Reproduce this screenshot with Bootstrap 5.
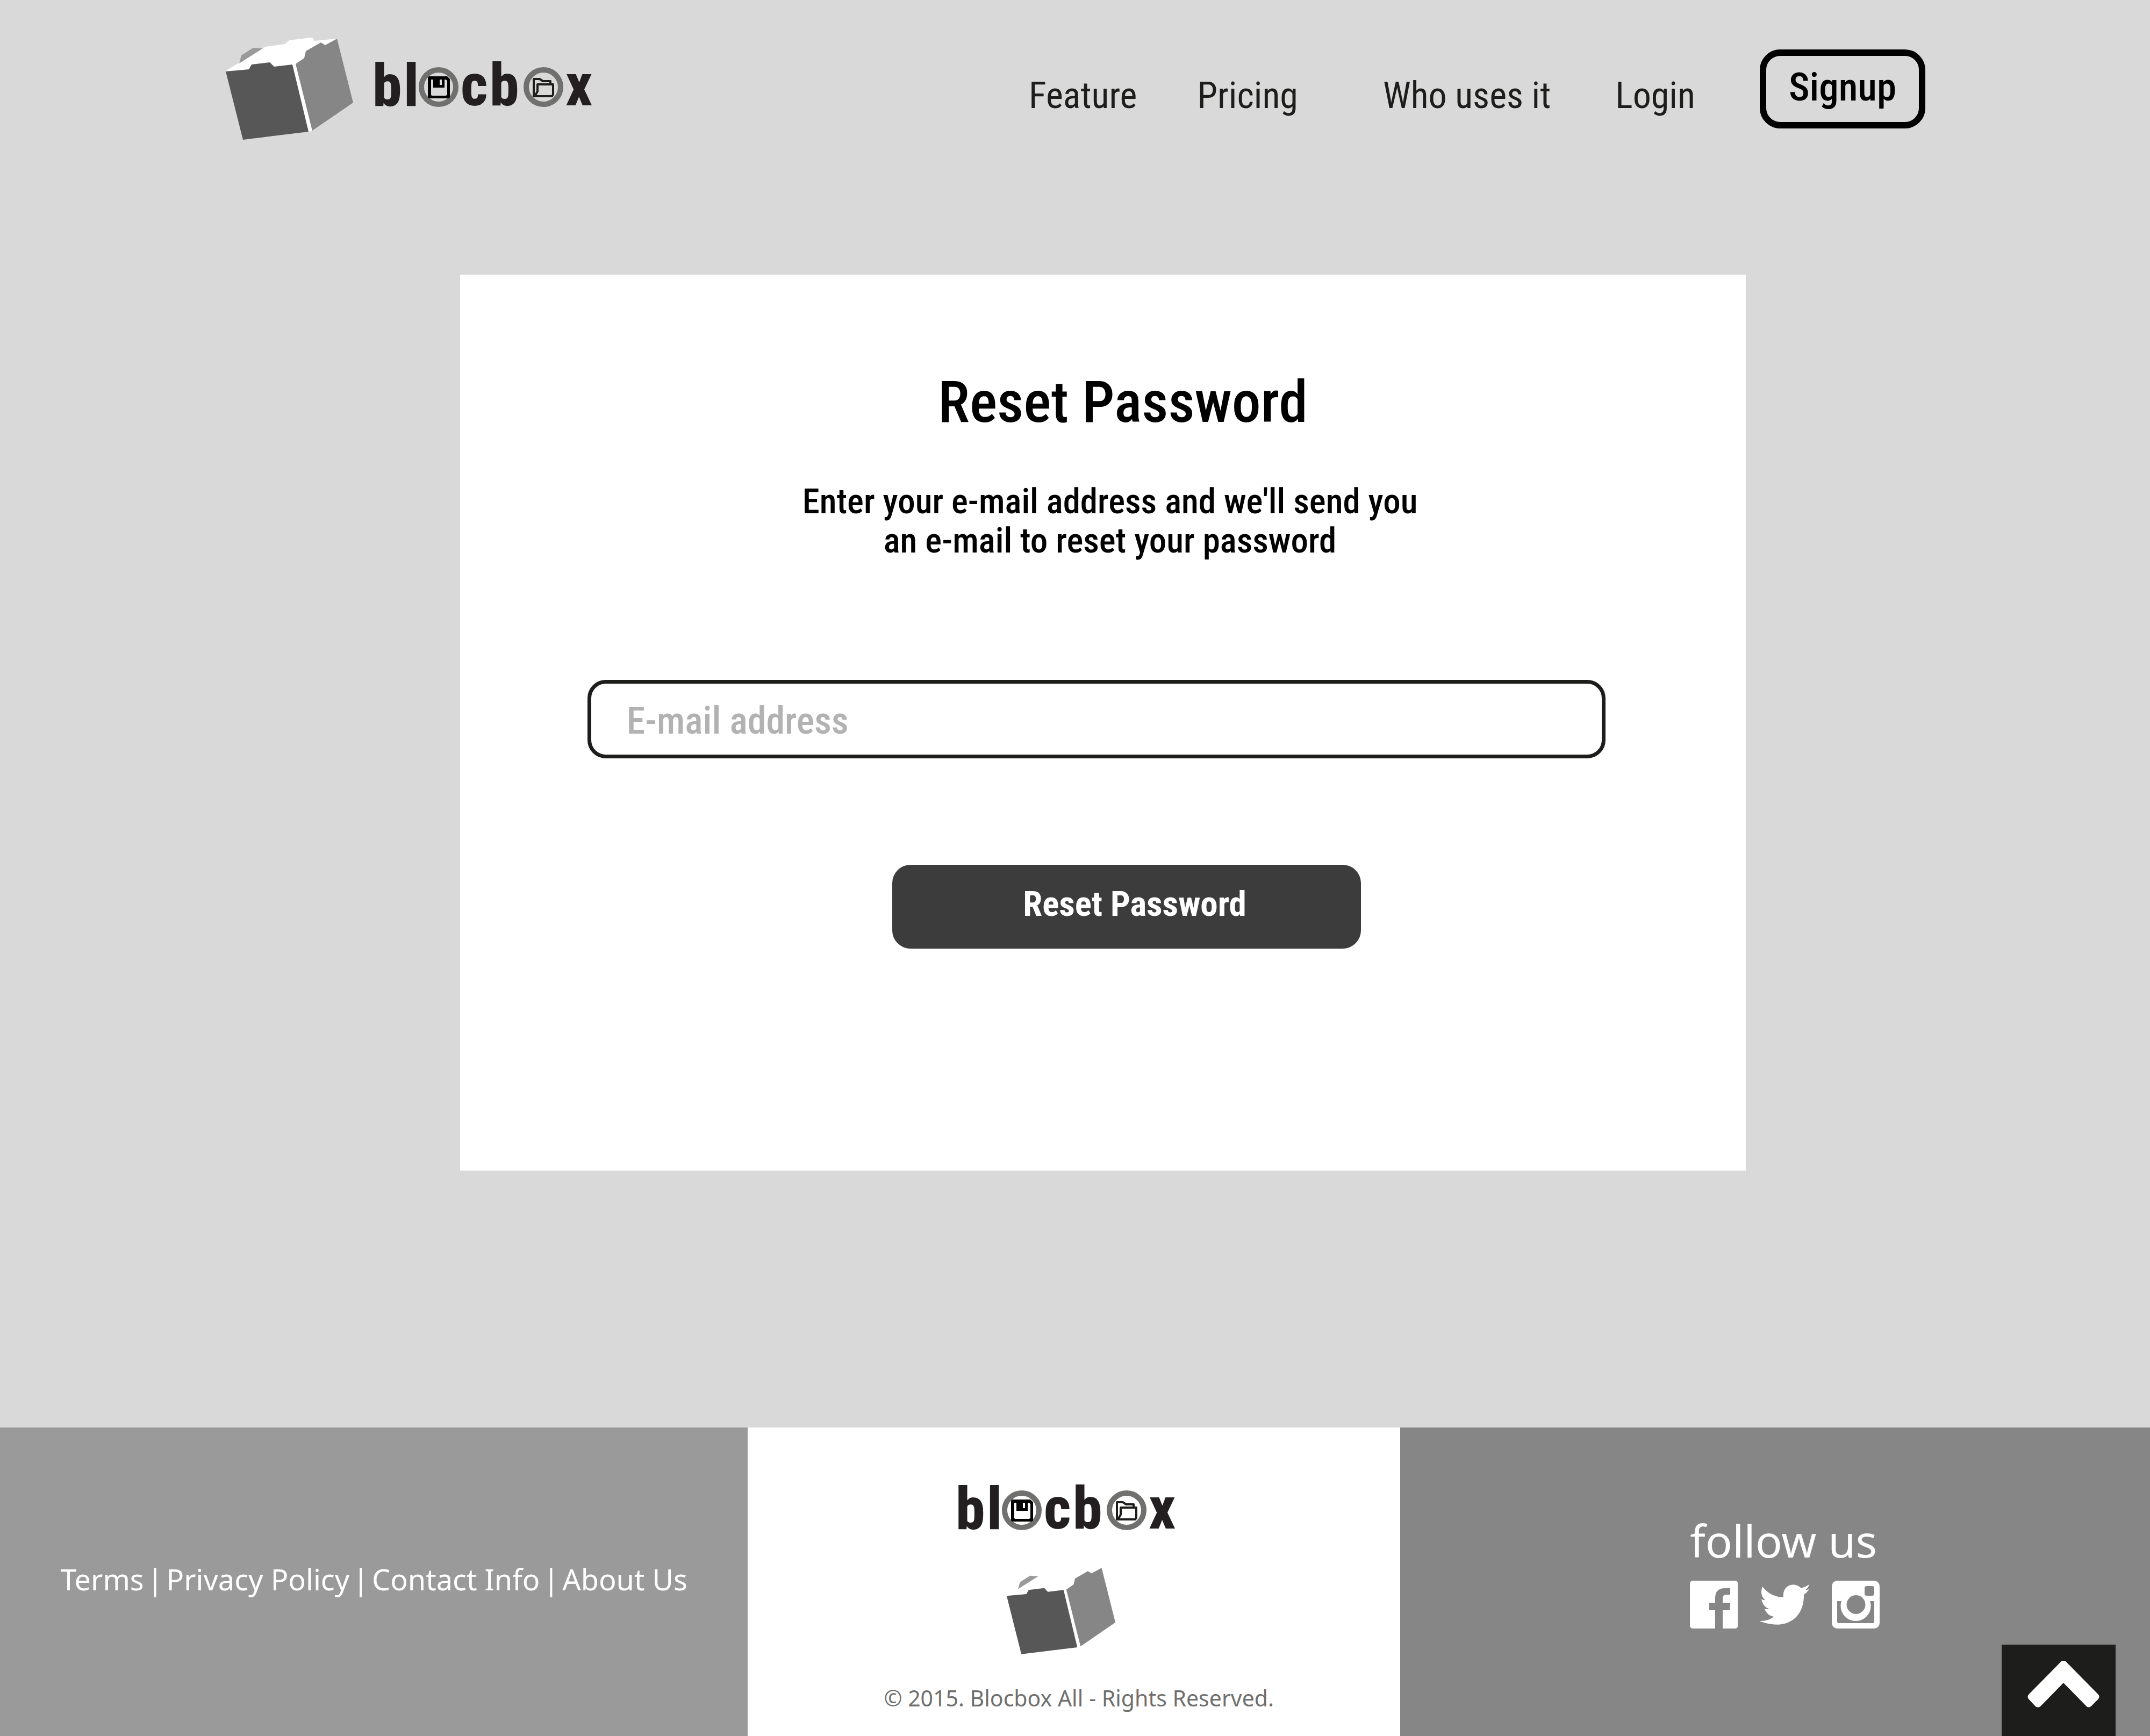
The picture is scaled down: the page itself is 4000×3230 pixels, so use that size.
<!DOCTYPE html>
<html lang="en">
<head>
<meta charset="utf-8">
<meta name="viewport" content="width=device-width, initial-scale=1">
<title>Blocbox - Reset Password</title>
<link rel="stylesheet" href="https://cdn.jsdelivr.net/npm/bootstrap@5.3.0/dist/css/bootstrap.min.css">
<style>
  body { background: #d9d9d9; font-family: "Roboto Condensed", "Liberation Sans Narrow", "Liberation Sans", sans-serif; color: #000; }
  .site-head { padding: 68px 10.45% 0; }
  .brand-logo { width: 688px; height: 194px; }
  .site-nav .nav-link { padding: 26px 0 0; font-size: 68px; line-height: 80px; color: #1d1d1b; }
  .gap-s { margin-right: 112px; }
  .gap-m { margin-right: 120px; }
  .gap-l { margin-right: 158px; }
  .btn-signup { border: 12px solid #000; border-radius: 38px; padding: 18px 42px 24px; font-size: 73px; line-height: 81px; font-weight: 500; color: #000; }
  .reset-card { width: 59.8%; margin: 249px 0 0 21.4%; padding: 172px 0 413px; background: #fff; }
  .reset-title { font-size: 108px; line-height: 130px; font-weight: 500; padding-left: 74px; margin: 0 0 84px; }
  .reset-text { font-size: 65px; line-height: 73px; font-weight: 500; padding-left: 26px; margin: 0 0 222px; }
  .reset-form { padding: 0 10.9% 0 9.9%; }
  .mail-box { height: 146px; border: 7px solid #1d1d1b; border-radius: 34px; padding: 6px 66px 0; font-size: 70px; font-weight: 500; }
  .mail-box::placeholder { color: #b2b2b2; opacity: 1; }
  .btn-reset { width: 46%; margin: 198px 0 0 112px; padding: 27px 0 37px 30px; border-radius: 34px; background: #3c3c3c; color: #fff; font-size: 65px; line-height: 90px; font-weight: 700; }
  .site-foot { min-height: 574px; font-family: "Noto Sans", "Open Sans", sans-serif; color: #fff; }
  .foot-links { width: 34.78%; padding-bottom: 10px; background: #9a9a9a; font-size: 54px; line-height: 80px; }
  .foot-links nav { gap: 6px; }
  .foot-brand { width: 30.35%; background: #fff; color: #6f6f6e; padding: 105px 0 30px; }
  .foot-follow { background: #868686; padding-left: 539px; padding-top: 160px; }
  .foot-word { width: 412px; height: 92px; margin-left: 22px; }
  .foot-box { width: 204px; height: 163px; margin: 63px 0 50px; }
  .foot-copy { font-size: 41px; line-height: 60px; padding-left: 18px; }
  .follow-title { font-size: 83px; line-height: 100px; margin: 0 0 25px; }
  .social-row { gap: 42px; }
  .social-icon { width: 90px; height: 90px; display: block; overflow: visible; }
  .btn-top { right: 64px; bottom: 0; width: 212px; height: 170px; background: #1d1d1b; border-radius: 0; padding: 29px 0 0 18px; }
</style>
<script src="https://cdn.jsdelivr.net/npm/bootstrap@5.3.0/dist/js/bootstrap.bundle.min.js"></script>
</head>
<body class="d-flex flex-column min-vh-100">
<svg width="0" height="0" class="position-absolute" aria-hidden="true">
  <defs>
    <g id="folderBox">
      <path fill="#fff" d="M420 132 488 90 493 87 530 82 538 75 577 70 582 71 585 76 627 72 600 110 552 119 581 244 574 245 544 122 500 130Z"/>
      <path fill="#9a9a9a" d="M445 118 449 103 471 89 489 90Z"/>
      <path fill="#575757" d="M420 133 463 129 468 120 502 116 510 124 544 120 574 245 452 260Z"/>
      <path fill="#868686" d="M550 119 566 108 569 95 597 79 605 84 627 72 657 191 581 243Z"/>
    </g>
    <g id="wordMark">
      <g font-family="'Roboto Condensed','Liberation Sans Narrow','Liberation Sans',sans-serif" font-weight="800" font-size="110" fill="#231f20">
        <text x="693" y="197">b</text><text x="751" y="197">l</text><text x="857" y="196">c</text><text x="911" y="196">b</text><text x="1052" y="196">x</text>
      </g>
      <g fill="none" stroke="#70706f" stroke-width="10"><circle cx="816" cy="162" r="32"/><circle cx="1011" cy="162" r="32"/></g>
      <path fill="#000" fill-rule="evenodd" d="M798 142H832L837 147V181L835 183H798L796 181V144ZM802 148V176L803 178H830L832 176V150L829 148H827V163H806V148ZM818 148V158H822V148Z"/>
      <path fill="none" stroke="#1d1d1b" stroke-width="4" stroke-linejoin="round" d="M1024 155V151H1010L1004 147H993V179H1027L1029 176V157H1000V170L995 179"/>
    </g>
  </defs>
</svg>

<header class="site-head d-flex align-items-center justify-content-between">
  <a href="#" aria-label="blocbox">
    <svg class="brand-logo d-block" viewBox="418 68 688 194"><use href="#folderBox"/><use href="#wordMark"/></svg>
  </a>
  <nav class="site-nav d-flex align-items-center" aria-label="Main">
    <a class="nav-link gap-s" href="#">Feature</a>
    <a class="nav-link gap-l" href="#">Pricing</a>
    <a class="nav-link gap-m" href="#">Who uses it</a>
    <a class="nav-link gap-m" href="#">Login</a>
    <button type="button" class="btn btn-signup">Signup</button>
  </nav>
</header>

<main class="flex-grow-1">
  <section class="reset-card">
    <h1 class="reset-title text-center">Reset Password</h1>
    <p class="reset-text text-center">Enter your e-mail address and we'll send you<br>an e-mail to reset your password</p>
    <form class="reset-form">
      <input class="form-control mail-box" type="email" id="email" aria-label="E-mail address" placeholder="E-mail address">
      <div class="d-flex justify-content-center"><button type="button" class="btn btn-reset">Reset Password</button></div>
    </form>
  </section>
</main>

<footer class="site-foot d-flex position-relative">
  <div class="foot-links d-flex align-items-center justify-content-center">
    <nav class="d-flex" aria-label="Footer">
      <a class="text-reset text-decoration-none" href="#">Terms</a><span>|</span>
      <a class="text-reset text-decoration-none" href="#">Privacy Policy</a><span>|</span>
      <a class="text-reset text-decoration-none" href="#">Contact Info</a><span>|</span>
      <a class="text-reset text-decoration-none" href="#">About Us</a>
    </nav>
  </div>
  <div class="foot-brand d-flex flex-column align-items-center">
    <div class="d-flex flex-column align-items-center pe-5">
      <svg class="foot-word" viewBox="694 113 412 92" role="img" aria-label="blocbox"><use href="#wordMark"/></svg>
      <svg class="foot-box" viewBox="419 71 239 190" aria-hidden="true"><use href="#folderBox"/></svg>
    </div>
    <div class="foot-copy">© 2015. Blocbox All - Rights Reserved.</div>
  </div>
  <div class="foot-follow flex-grow-1">
    <h2 class="follow-title fw-normal">follow us</h2>
    <div class="social-row d-flex">
      <a href="#" aria-label="Facebook"><svg class="social-icon" viewBox="0 0 90 90"><path fill="#fff" d="M4 0H86L89 3V86L86 89H61V55H74L75 41H61V33Q61 26 68 26H75V14H65Q48 14 47 31V41H36V55H47V89H4L0 86V3Z"/></svg></a>
      <a href="#" aria-label="Twitter"><svg class="social-icon" viewBox="0 0 90 90"><path fill="#fff" d="M-3 75Q13 76 24 67Q12 65 7 53H16Q3 48 1 34Q5 37 8 36Q-3 26 3 11Q17 30 42 31C39 8 63 1 75 14Q83 12 90 7Q88 14 82 18L90 16Q86 22 80 26C81 64 53 96 -3 75Z"/></svg></a>
      <a href="#" aria-label="Instagram"><svg class="social-icon" viewBox="0 0 90 90"><path fill="#fff" fill-rule="evenodd" d="M12 0H77Q89 0 89 12V77Q89 89 77 89H12Q0 89 0 77V12Q0 0 12 0ZM65 10Q61 10 61 14V24Q61 28 65 28H75Q79 28 79 24V14Q79 10 75 10ZM10 38V76Q10 79 13 79H76Q79 79 79 76V38H71A28 28 0 1 1 18 38ZM45 27A17 17 0 0 0 45 62A17 17 0 0 0 45 27Z"/></svg></a>
    </div>
  </div>
  <button type="button" class="btn btn-top position-absolute d-flex justify-content-center align-items-start" aria-label="Back to top">
    <svg width="134" height="87" viewBox="0 0 134 87"><path fill="#fff" d="M63 1Q67-1 71 1L132 63Q135 67 132 71L118 85Q114 88 110 85L67 41 24 85Q19 88 15 85L2 71Q-1 67 2 63Z"/></svg>
  </button>
</footer>
</body>
</html>
